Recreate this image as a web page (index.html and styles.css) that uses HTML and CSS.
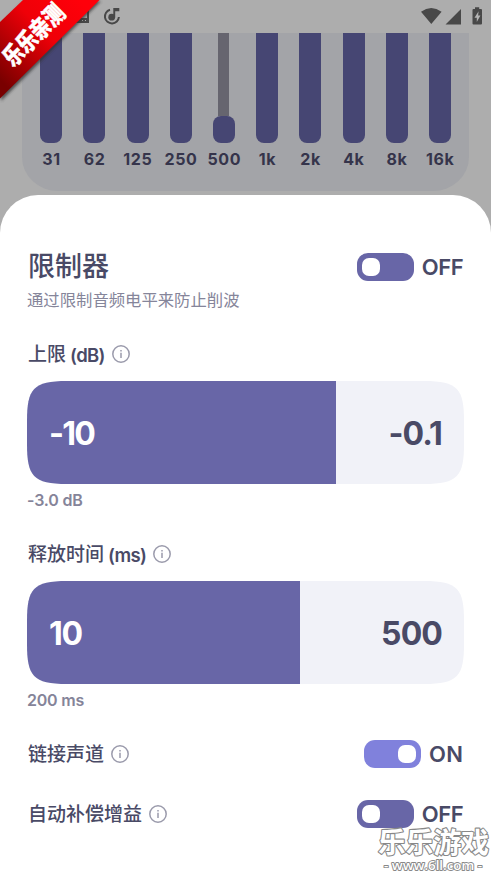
FILE: index.html
```html
<!DOCTYPE html>
<html lang="zh-CN">
<head>
<meta charset="utf-8">
<title>限制器</title>
<link rel="stylesheet" href="styles.css">
</head>
<body>
<svg class="defs" width="0" height="0" aria-hidden="true">
  <symbol id="info" viewBox="0 0 18 18"><circle cx="9" cy="9" r="8.2" fill="none" stroke="currentColor" stroke-width="1.5"/><path d="M9 7.8v5.1M9 5v1.5" stroke="currentColor" stroke-width="1.5"/></symbol>
</svg>
<main class="screen">
  <header class="status">
    <svg class="status-left" width="60" height="33" viewBox="0 0 60 33">
      <path fill="#484848" fill-rule="evenodd" d="M5 9h21a2 2 0 0 1 2 2v12H5zM20 11v7h6v-7zM21 20v1h1v-1zm3 0v1h1v-1z"/>
      <path fill="none" stroke="#484848" stroke-width="2" d="M49 9.700A7 7 0 1 0 57.900 17"/>
      <circle cx="50.700" cy="17.200" r="3.400" fill="#484848"/><path fill="#484848" d="M52.300 8h6v3.200h-4.100v6h-1.900z"/>
    </svg>
    <svg class="status-right" width="70" height="33" viewBox="0 0 70 33">
      <path fill="#484848" d="M0 11.700Q10.200 4.300 20.600 11.700L10.300 24zM24.500 24.500L40 9v15.500zM54 7.200h4.200v1.900H60q1 0 1 1v13.400q0 1-1 1h-7.500q-1 0-1-1V10.100q0-1 1-1H54z"/>
      <path fill="#b4b4b4" d="M57.600 11.300l-4.100 6.500h2.300v4.300l3.600-6.500h-2.300z"/>
    </svg>
  </header>
  <section class="equalizer">
    <div class="band"><i class="bar"></i><span>31</span></div>
    <div class="band"><i class="bar"></i><span>62</span></div>
    <div class="band"><i class="bar"></i><span>125</span></div>
    <div class="band"><i class="bar"></i><span>250</span></div>
    <div class="band"><i class="bar low"></i><span>500</span></div>
    <div class="band"><i class="bar"></i><span>1k</span></div>
    <div class="band"><i class="bar"></i><span>2k</span></div>
    <div class="band"><i class="bar"></i><span>4k</span></div>
    <div class="band"><i class="bar"></i><span>8k</span></div>
    <div class="band"><i class="bar"></i><span>16k</span></div>
  </section>
  <section class="sheet">
    <div class="heading">
      <h1>限制器</h1>
      <div class="switch-group"><i class="switch"></i><span class="off">OFF</span></div>
    </div>
    <p class="description">通过限制音频电平来防止削波</p>
    <div class="setting">
      <div class="label">上限 <b>(dB)</b><svg class="info"><use href="#info"/></svg></div>
      <div class="slider"><div class="fill ceiling"></div><span class="min negative">-10</span><span class="max negative">-0.1</span></div>
      <div class="value">-3.0 dB</div>
    </div>
    <div class="setting">
      <div class="label">释放时间 <b>(ms)</b><svg class="info"><use href="#info"/></svg></div>
      <div class="slider"><div class="fill release"></div><span class="min">10</span><span class="max">500</span></div>
      <div class="value">200 ms</div>
    </div>
    <div class="toggle-row">
      <div class="label">链接声道<svg class="info"><use href="#info"/></svg></div>
      <div class="switch-group"><i class="switch on"></i><span class="on-text">ON</span></div>
    </div>
    <div class="toggle-row">
      <div class="label">自动补偿增益<svg class="info"><use href="#info"/></svg></div>
      <div class="switch-group"><i class="switch"></i><span class="off">OFF</span></div>
    </div>
  </section>
  <svg class="ribbon" width="106" height="106" viewBox="0 0 106 106">
    <defs>
      <linearGradient id="red" gradientUnits="userSpaceOnUse" x1="80" y1="0" x2="0" y2="80"><stop offset="0" stop-color="#ff000a"/><stop offset=".42" stop-color="#ef0008"/><stop offset="1" stop-color="#790000"/></linearGradient>
      <filter id="shadow"><feGaussianBlur stdDeviation="1.500"/></filter>
    </defs>
    <path d="M24 1H101L1 101V25z" fill="#333" opacity=".75" filter="url(#shadow)"/>
    <path d="M23 0H99.500L0 98.500V22z" fill="url(#red)"/>
    <text transform="translate(13 68) rotate(-45)" textLength="76" lengthAdjust="spacingAndGlyphs">乐乐亲测</text>
  </svg>
  <svg class="watermark" width="118" height="52" viewBox="0 0 118 52">
    <text class="brand" x="5" y="31" textLength="111" lengthAdjust="spacingAndGlyphs">乐乐游戏</text>
    <text class="site" x="11" y="47.500" textLength="98" lengthAdjust="spacingAndGlyphs">- www.6ll.com -</text>
  </svg>
</main>
</body>
</html>
```
FILE: styles.css
```css
* { box-sizing: border-box; }
body { margin: 0; background: #adadad; color: #494a66; font-family: Inter, "Noto Sans CJK SC", sans-serif; }
.defs { position: absolute; }
.screen { position: relative; width: 491px; height: 874px; overflow: hidden; display: flex; flex-direction: column; background: #adadad; }
.status { height: 33px; flex: none; display: flex; justify-content: space-between; padding: 0 0 0 61px; }
.equalizer { height: 158px; flex: none; margin: 0 22px 4px; padding: 0 7.600px; display: flex; background: #a3a4a8; border-radius: 0 0 36px 36px / 0 0 34px 34px; }
.band { flex: 1; display: flex; flex-direction: column; align-items: center; font-size: 16px; font-weight: 700; letter-spacing: .6px; color: #35344b; }
.band span { margin-top: 6px; line-height: 20px; white-space: nowrap; margin-right: -.6px; }
.bar { width: 22px; height: 109.500px; background: #464673; border-radius: 0 0 8px 8px; }
.band:has(.low)::before { content: ""; width: 11px; height: 83px; background: #66656f; flex: none; }
.bar.low { height: 27px; margin-top: -.500px; border-radius: 8px; }
.sheet { flex: 1; background: #fff; border-radius: 38px 38px 0 0; padding: 52px 27px 0; }
.heading { height: 40px; display: flex; justify-content: space-between; align-items: center; }
h1 { margin: 0 0 0 1px; font-size: 27px; font-weight: 500; line-height: 40px; }
.switch-group { display: flex; align-items: center; gap: 8px; font-size: 22px; font-weight: 600; line-height: 28px; padding-right: 1px; }
.switch-group .off { letter-spacing: -.4px; margin-right: -.4px; }
.on-text { letter-spacing: .5px; margin-right: -.5px; }
.switch { width: 57px; height: 28px; border-radius: 11px; background: #6866a7; display: flex; align-items: center; padding: 0 5px; }
.switch::before { content: ""; width: 18px; height: 18px; border-radius: 7px; background: #fff; }
.switch.on { background: #8081dc; justify-content: flex-end; }
.description { margin: 0; font-size: 16.350px; line-height: 26px; color: #85859a; }
.setting { height: 200px; padding-top: 26px; }
.label { display: flex; align-items: center; height: 30px; font-size: 19px; font-weight: 500; line-height: 30px; white-space: pre; padding: 2px 0 0 1px; }
.label b { font-size: 18.500px; font-weight: 600; letter-spacing: -.7px; margin-left: -1px; }
.info { width: 18px; height: 18px; margin: -3px 0 0 7px; color: #9b9bac; }
.slider { position: relative; height: 103px; margin-top: 12px; width: 437px; background: #f1f2f8; display: flex; align-items: center; justify-content: space-between; padding: 2px 22px 0; font-size: 32px; font-weight: 700; clip-path: path("M0 40C0 8 6 0 40 0H397C431 0 437 8 437 40V63C437 95 431 103 397 103H40C6 103 0 95 0 63Z"); }
.fill { position: absolute; inset: 0 auto 0 0; background: #6866a7; }
.ceiling { width: 309px; }
.release { width: 273px; }
.slider span { position: relative; letter-spacing: -1.200px; }
.slider .negative { letter-spacing: -1.800px; }
.slider .max { letter-spacing: -.900px; }
.min { color: #fff; }
.value { height: 32px; line-height: 33px; font-size: 16px; font-weight: 600; letter-spacing: -.2px; color: #858499; }
.toggle-row { height: 60px; display: flex; justify-content: space-between; align-items: center; }
.setting + .toggle-row { margin-top: 11px; }
.ribbon { position: absolute; left: 0; top: 0; }
.ribbon text { fill: #fff; font: 900 24px "Noto Sans CJK SC", sans-serif; stroke: #fff; stroke-width: .5px; }
.watermark { position: absolute; right: 0; bottom: 0; }
.watermark text { fill: #fff; stroke: #888; paint-order: stroke; stroke-linejoin: round; }
.brand { font: 700 28px "Noto Sans CJK SC", sans-serif; stroke-width: 2.200px; }
.site { font: 600 12.500px "Open Sans", sans-serif; stroke-width: 1.800px; }
```
